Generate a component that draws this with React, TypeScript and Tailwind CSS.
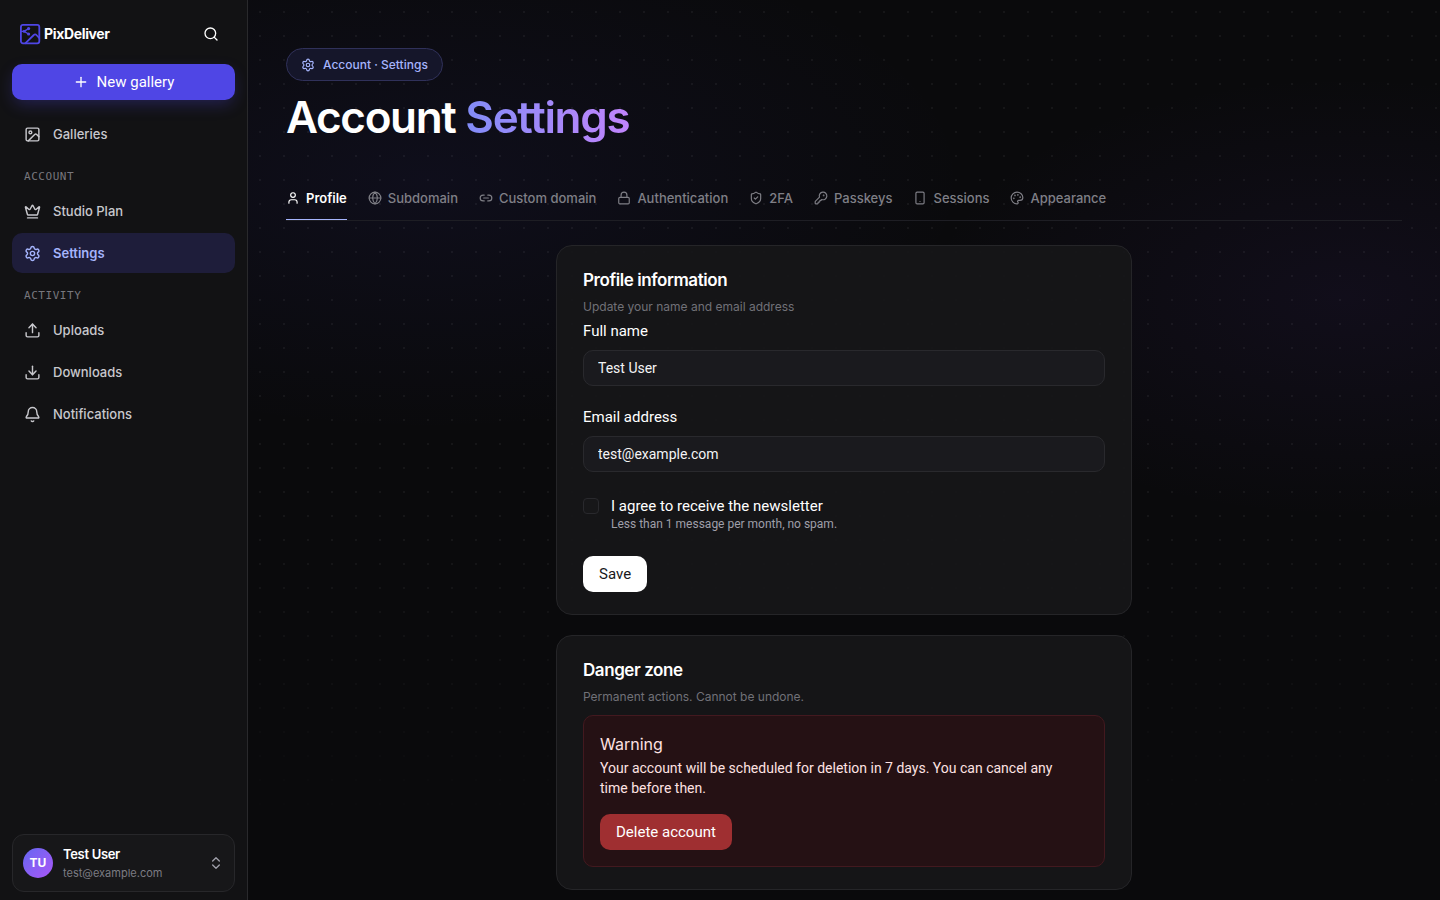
import { useState } from "react";
import {
  Bell,
  ChevronsUpDown,
  Crown,
  Download,
  Globe,
  Image,
  KeyRound,
  Link2,
  Lock,
  type LucideIcon,
  Palette,
  Plus,
  Search,
  Settings,
  ShieldCheck,
  Smartphone,
  Upload,
  User,
} from "lucide-react";

type NavItem = { label: string; icon: LucideIcon };

const navGroups: { title?: string; items: NavItem[] }[] = [
  { items: [{ label: "Galleries", icon: Image }] },
  {
    title: "Account",
    items: [
      { label: "Studio Plan", icon: Crown },
      { label: "Settings", icon: Settings },
    ],
  },
  {
    title: "Activity",
    items: [
      { label: "Uploads", icon: Upload },
      { label: "Downloads", icon: Download },
      { label: "Notifications", icon: Bell },
    ],
  },
];

const tabs: NavItem[] = [
  { label: "Profile", icon: User },
  { label: "Subdomain", icon: Globe },
  { label: "Custom domain", icon: Link2 },
  { label: "Authentication", icon: Lock },
  { label: "2FA", icon: ShieldCheck },
  { label: "Passkeys", icon: KeyRound },
  { label: "Sessions", icon: Smartphone },
  { label: "Appearance", icon: Palette },
];

function Logo() {
  return (
    <svg viewBox="0 0 24 24" className="size-6 text-[#4f46e5]" fill="none" stroke="currentColor" strokeWidth="1.8" strokeLinecap="round" strokeLinejoin="round">
      <rect x="2.9" y="2.9" width="18.4" height="18.4" rx="2" />
      <path d="M7.5 21.2 15.8 13a1.8 1.8 0 0 1 2.6 0l2.8 3" />
      <path d="M3 9.4h3l4.6-2.8M6 9.4l4.6 2.6" strokeWidth="1.3" />
      <circle cx="6" cy="9.4" r="1.4" fill="currentColor" stroke="none" />
      <circle cx="10.6" cy="6.6" r="1.6" fill="currentColor" stroke="none" />
      <circle cx="10.6" cy="12" r="1.6" fill="currentColor" stroke="none" />
    </svg>
  );
}

function Sidebar() {
  return (
    <aside className="flex w-62 shrink-0 flex-col border-r border-[#29292c] bg-[#121214] px-3 pt-4 pb-2">
      <div className="flex h-9 items-center justify-between px-1.5">
        <a href="#" className="flex items-center gap-0.5 text-sm font-bold tracking-tight text-white">
          <Logo />
          PixDeliver
        </a>
        <button aria-label="Search" className="flex size-9 items-center justify-center text-white">
          <Search className="size-4" />
        </button>
      </div>

      <button className="mt-3 flex h-9 shrink-0 items-center justify-center gap-2 rounded-[10px] bg-[#4f46e5] font-[Roboto] text-[15px] text-white shadow-[0_6px_16px_-2px_rgba(79,70,229,0.3)]">
        <Plus className="size-4" />
        New gallery
      </button>

      <nav className="mt-3.5">
        {navGroups.map((group) => (
          <div key={group.items[0].label}>
            {group.title && (
              <h2 className="flex h-[37px] items-center px-3 pt-2 font-['DejaVu_Sans_Mono'] text-[11px] leading-4 tracking-wider text-[#77777d] uppercase">
                {group.title}
              </h2>
            )}
            <ul className="flex flex-col gap-0.5">
              {group.items.map(({ label, icon: Icon }) => (
                <li key={label}>
                  <a
                    href="#"
                    className={
                      label === "Settings"
                        ? "flex h-10 items-center gap-3 rounded-[10px] bg-[#1e1d3a] px-3 text-[13px] leading-5 font-semibold text-[#a5b4fc]"
                        : "flex h-10 items-center gap-3 rounded-[10px] px-3 text-[13px] leading-5 font-medium text-[#c8c8cd]"
                    }
                  >
                    <Icon className="size-[17px]" />
                    {label}
                  </a>
                </li>
              ))}
            </ul>
          </div>
        ))}
      </nav>

      <button className="mt-auto flex h-[58px] shrink-0 items-center gap-2.5 rounded-xl border border-[#27272a] bg-[#171719] px-2.5 text-left">
        <span className="flex size-[30px] items-center justify-center rounded-full bg-linear-to-br from-[#6366f1] to-[#a855f7] text-xs font-bold text-white">
          TU
        </span>
        <span className="flex-1">
          <span className="block text-[13px] leading-5 font-semibold tracking-tight text-white">Test User</span>
          <span className="block text-[11px] leading-[18px] text-[#7c7c83]">test@example.com</span>
        </span>
        <ChevronsUpDown className="size-4 text-[#9f9fa9]" />
      </button>
    </aside>
  );
}

function Card({ title, description, children }: { title: string; description: string; children: React.ReactNode }) {
  return (
    <section className="rounded-2xl border border-[#252528] bg-[#161618]/90 px-[26px] pt-5 pb-[22px]">
      <h2 className="text-[17px] leading-7 font-semibold tracking-tight text-white">{title}</h2>
      <p className="mt-[3px] text-xs leading-5 text-[#717177]">{description}</p>
      {children}
    </section>
  );
}

function Field({ id, label, type, value }: { id: string; label: string; type: string; value: string }) {
  return (
    <div>
      <label htmlFor={id} className="block font-[Roboto] text-[15px] leading-5 text-white">
        {label}
      </label>
      <input
        id={id}
        type={type}
        defaultValue={value}
        className="mt-[9px] block h-9 w-full rounded-[10px] border border-[#29292d] bg-[#1a1a1e] px-3.5 font-[Roboto] text-sm text-[#f4f4f5] outline-none"
      />
    </div>
  );
}

export default function App() {
  const [activeTab, setActiveTab] = useState("Profile");

  return (
    <div className="flex h-screen overflow-hidden bg-[#0a0a0c] font-[Inter,sans-serif]">
      <Sidebar />

      {/* Layers, top to bottom: fade, dot grid, violet glow, indigo glow */}
      <main className="flex-1 overflow-hidden bg-[linear-gradient(to_bottom,transparent_60%,rgba(10,10,12,1)_92%),radial-gradient(circle,rgba(255,255,255,0.05)_1px,transparent_1px),radial-gradient(ellipse_50%_35%_at_92%_33%,rgba(88,50,170,0.09),transparent_70%),radial-gradient(ellipse_65%_40%_at_15%_20%,rgba(79,70,229,0.07),transparent_70%)] bg-[size:100%_100%,24px_24px,100%_100%,100%_100%] px-[38px] pt-12">
        <span className="inline-flex h-[33px] items-center gap-2 rounded-full border border-[#30315a] bg-[#15162a] px-3.5 text-xs font-medium text-[#a5b4fc]">
          <Settings className="size-3.5" />
          Account · Settings
        </span>
        <h1 className="mt-3 text-[44px] leading-12 font-semibold tracking-[-0.03em] text-white">
          Account{" "}
          <span className="bg-linear-to-r from-[#818cf8] to-[#c084fc] bg-clip-text text-transparent">Settings</span>
        </h1>

        <div role="tablist" className="mt-[35px] flex gap-[21px] border-b border-[#1e1e24]">
          {tabs.map(({ label, icon: Icon }) => (
            <button
              key={label}
              role="tab"
              aria-selected={activeTab === label}
              onClick={() => setActiveTab(label)}
              className={
                activeTab === label
                  ? "flex h-11 items-center gap-1.5 border-b border-[#a5b4fc] text-[13px] leading-5 font-semibold text-white"
                  : "flex h-11 items-center gap-1.5 border-b border-transparent text-[13px] leading-5 font-medium text-[#7f7f86]"
              }
            >
              <Icon className="size-3.5" />
              {label}
            </button>
          ))}
        </div>

        <div className="mx-auto mt-6 flex max-w-xl flex-col gap-5">
          <Card title="Profile information" description="Update your name and email address">
            <form onSubmit={(e) => e.preventDefault()}>
              <div className="mt-1 flex flex-col gap-[21px]">
                <Field id="name" label="Full name" type="text" value="Test User" />
                <Field id="email" label="Email address" type="email" value="test@example.com" />
              </div>
              <div className="mt-6 flex items-start gap-3">
                <input
                  id="newsletter"
                  type="checkbox"
                  className="mt-0.5 size-4 appearance-none rounded border border-[#29292d] bg-[#171719] checked:bg-[#4f46e5]"
                />
                <label htmlFor="newsletter" className="font-[Roboto] text-[15px] leading-5 text-white">
                  I agree to receive the newsletter
                  <span className="block text-xs leading-4 text-[#9f9fa9]">
                    Less than 1 message per month, no spam.
                  </span>
                </label>
              </div>
              <button type="submit" className="mt-6 h-9 rounded-[10px] bg-white px-4 font-[Roboto] text-[15px] text-[#18181b]">
                Save
              </button>
            </form>
          </Card>

          <Card title="Danger zone" description="Permanent actions. Cannot be undone.">
            <div className="mt-2 rounded-[10px] border border-[#43191f] bg-[#251114] p-4 text-[#fee2e2]">
              <h3 className="text-base leading-6">Warning</h3>
              <p className="mt-0.5 pr-4 font-[Roboto] text-sm leading-5">
                Your account will be scheduled for deletion in 7 days. You can cancel any time before then.
              </p>
              <button className="mt-4 h-9 rounded-[10px] bg-[#9f2f31] px-4 font-[Roboto] text-[15px] text-white">
                Delete account
              </button>
            </div>
          </Card>
        </div>
      </main>
    </div>
  );
}
